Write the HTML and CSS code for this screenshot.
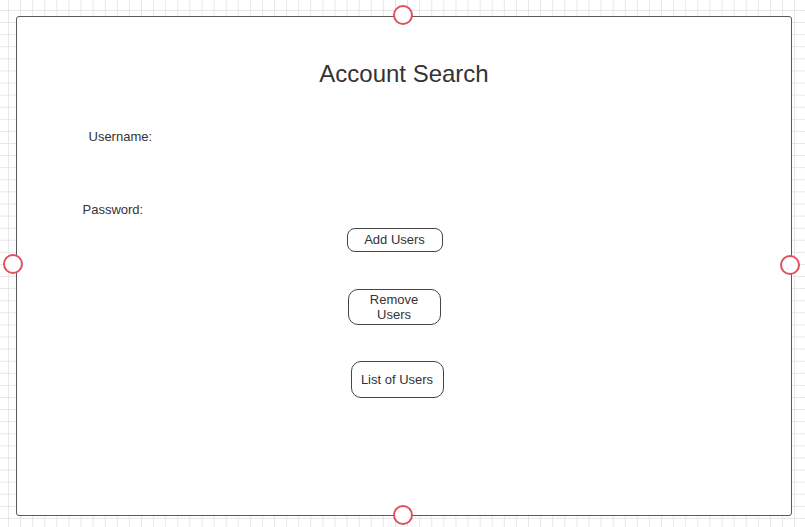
FILE: index.html
```html
<!DOCTYPE html>
<html lang="en">
<head>
    <meta charset="UTF-8">
    <meta name="viewport" content="width=device-width, initial-scale=1.0">
    <title>Account Search - Mockup</title>
    <link rel="stylesheet" href="styles.css">
</head>
<body>

    <!-- 畫布上的外框 -->
    <div class="shape">
        <h1 class="title">Account Search</h1>

        <div class="label label-user">Username:</div>
        <div class="label label-pass">Password:</div>

        <div class="btn btn-add">Add Users</div>
        <div class="btn btn-remove">Remove<br>Users</div>
        <div class="btn btn-list">List of Users</div>

        <!-- 選取控制點 -->
        <span class="handle handle-top"></span>
        <span class="handle handle-left"></span>
        <span class="handle handle-right"></span>
        <span class="handle handle-bottom"></span>
    </div>

</body>
</html>
```

FILE: styles.css
```css
html, body {
    height: 100%;
}

body {
    margin: 0;
    padding: 16px 0 0 16px;
    box-sizing: border-box;
    overflow: hidden;
    font-family: 'Liberation Sans', Arial, sans-serif;
    color: #333;
    background-color: #fff;
    background-image:
        linear-gradient(to right, #e6e6e6 1px, transparent 1px),
        linear-gradient(to bottom, #e6e6e6 1px, transparent 1px);
    background-size: 12.1px 12.1px;
    background-position: 8px 10px;
}

.shape {
    position: relative;
    width: 776px;
    height: 500px;
    box-sizing: border-box;
    border: 1.5px solid #5a5a5a;
    border-radius: 3px;
    background-color: #fff;
    display: flex;
    flex-direction: column;
    align-items: flex-start;
}

.title {
    align-self: stretch;
    margin: 42.5px 0 0;
    text-align: center;
    font-size: 24px;
    font-weight: normal;
    line-height: 28px;
    color: #333;
}

.label {
    font-size: 13px;
    line-height: 16px;
}

.label-user {
    margin: 41.5px 0 0 71.5px;
}

.label-pass {
    margin: 57px 0 0 65.5px;
}

.btn {
    box-sizing: border-box;
    display: flex;
    align-items: center;
    justify-content: center;
    text-align: center;
    font-size: 13px;
    line-height: 15px;
    border: 1px solid #444;
    border-radius: 8px;
    background-color: #fff;
}

.btn-add {
    margin: 9.5px 0 0 329.5px;
    width: 96px;
    height: 24px;
}

.btn-remove {
    margin: 37px 0 0 330.5px;
    width: 93px;
    height: 36px;
    border-radius: 10px;
}

.btn-list {
    margin: 36px 0 0 333.5px;
    width: 93px;
    height: 37px;
    border-radius: 10px;
}

.handle {
    position: absolute;
    width: 20px;
    height: 20px;
    box-sizing: border-box;
    border: 2px solid #e0505f;
    border-radius: 50%;
    background-color: #fff;
}

.handle-top {
    left: 375.5px;
    top: -12.5px;
}

.handle-left {
    left: -14.5px;
    top: 237px;
}

.handle-right {
    left: 762.5px;
    top: 237.5px;
}

.handle-bottom {
    left: 375.5px;
    top: 487.5px;
}
```
